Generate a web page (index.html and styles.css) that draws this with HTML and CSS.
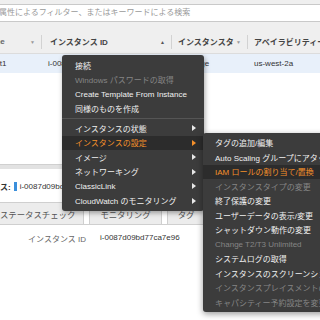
FILE: index.html
```html
<!DOCTYPE html>
<html lang="ja">
<head>
    <meta charset="UTF-8">
    <meta name="viewport" content="width=device-width, initial-scale=1.0">
    <title>EC2 インスタンス</title>
    <link rel="stylesheet" href="styles.css">
</head>
<body>
    <div class="toolbar">
        <div class="search">属性によるフィルター、またはキーワードによる検索</div>
    </div>

    <div class="grid">
        <div class="thead">
            <div class="th c1"><span class="cut-head">Name</span><span class="sort">▼</span></div>
            <div class="th c2"><span>インスタンス ID</span><span class="sort dark">▲</span></div>
            <div class="th c3"><span>インスタンスタ</span><span class="sort">▼</span></div>
            <div class="th c4"><span>アベイラビリティーゾーン</span></div>
        </div>
        <div class="trow selected">
            <div class="td"><span class="cut-cell">test1</span></div>
            <div class="td pad">i-0087d09bd77ca7e96</div>
            <div class="td pad">m4.large</div>
            <div class="td pad">us-west-2a</div>
        </div>
    </div>

    <div class="splitter"></div>

    <div class="detail-head">
        <strong>ス:</strong>
        <span class="swatch"></span>
        <span>i-0087d09bd77ca7e96</span>
    </div>

    <div class="tabs">
        <div class="tab first">ステータスチェック</div>
        <div class="tab">モニタリング</div>
        <div class="tab">タグ</div>
    </div>

    <div class="desc">
        <span class="label">インスタンス ID</span>
        <span class="value">i-0087d09bd77ca7e96</span>
    </div>

    <!-- right-click menu -->
    <div class="menu">
        <div class="item">接続</div>
        <div class="item disabled">Windows パスワードの取得</div>
        <div class="item">Create Template From Instance</div>
        <div class="item">同様のものを作成</div>
        <div class="sep"></div>
        <div class="item sub">インスタンスの状態<span class="arrow"></span></div>
        <div class="item sub active">インスタンスの設定<span class="arrow"></span>
            <div class="menu submenu">
                <div class="item">タグの追加/編集</div>
                <div class="item">Auto Scaling グループにアタッチ</div>
                <div class="item active">IAM ロールの割り当て/置換</div>
                <div class="item disabled">インスタンスタイプの変更</div>
                <div class="item">終了保護の変更</div>
                <div class="item">ユーザーデータの表示/変更</div>
                <div class="item">シャットダウン動作の変更</div>
                <div class="item disabled">Change T2/T3 Unlimited</div>
                <div class="item">システムログの取得</div>
                <div class="item">インスタンスのスクリーンショットの取得</div>
                <div class="item disabled">インスタンスプレイスメントの変更</div>
                <div class="item disabled">キャパシティー予約設定を変更</div>
            </div>
        </div>
        <div class="item sub">イメージ<span class="arrow"></span></div>
        <div class="item sub">ネットワーキング<span class="arrow"></span></div>
        <div class="item sub">ClassicLink<span class="arrow"></span></div>
        <div class="item sub">CloudWatch のモニタリング<span class="arrow"></span></div>
    </div>
</body>
</html>
```

FILE: styles.css
```css
html, body {
    margin: 0;
    width: 320px;
    height: 320px;
    overflow: hidden;
}
body {
    position: relative;
    background: white;
    font-family: "Liberation Sans", Arial, "Noto Sans CJK JP", sans-serif;
    font-size: 8px;
    color: #333;
}
.toolbar {
    background-color: #efefef;
    padding: 4px 0 8px;
}
.search {
    height: 16px;
    line-height: 16px;
    background: white;
    border-top: 1px solid #c9c9c9;
    border-bottom: 1px solid #c9c9c9;
    padding-left: 0;
    text-indent: -1px;
    color: #9a9a9a;
    white-space: nowrap;
}
.thead, .trow {
    display: grid;
    grid-template-columns: 42px 130px 76px 1fr;
}
.thead {
    height: 23px;
    align-items: center;
    background-color: #efefef;
    border-bottom: 1px solid #dcdcdc;
    font-weight: bold;
    color: #444;
}
.th {
    display: flex;
    justify-content: space-between;
    align-items: center;
    height: 14px;
    padding: 0 6px 0 8px;
    border-right: 1px solid #d2d2d2;
    white-space: nowrap;
    overflow: hidden;
}
.th.c1 {
    padding-left: 0;
}
.th.c3 {
    padding-left: 6px;
}
.th.c4 {
    border-right: none;
    padding-left: 6px;
}
.cut-head {
    margin-left: -17px;
    color: #666;
}
.sort {
    font-size: 5px;
    color: #999;
    font-weight: normal;
}
.sort.dark {
    color: #555;
}
.trow {
    height: 19px;
    align-items: center;
    white-space: nowrap;
}
.trow.selected {
    background-color: #e8f0fa;
}
.td {
    overflow: hidden;
}
.td.pad {
    padding-left: 6px;
}
.cut-cell {
    margin-left: -11px;
}
.splitter {
    margin-top: 91px;
    height: 4px;
    background-color: #e2e2e2;
    border-top: 1px solid #d0d0d0;
}
.detail-head {
    display: flex;
    align-items: center;
    gap: 3px;
    height: 31px;
    padding-top: 2px;
    white-space: nowrap;
}
.swatch {
    width: 3px;
    height: 9px;
    background-color: #3b8fdb;
}
.tabs {
    display: flex;
    gap: 5px;
    height: 22px;
    border-bottom: 1px solid #cfcfcf;
}
.tab {
    display: flex;
    align-items: center;
    padding: 0 10px;
    background-color: #ececec;
    border: 1px solid #cfcfcf;
    border-bottom: none;
    font-size: 8.4px;
    color: #555;
    white-space: nowrap;
}
.tab.first {
    margin-left: -11px;
    padding-right: 8px;
}
.desc {
    display: flex;
    gap: 14px;
    margin-top: 8px;
    white-space: nowrap;
}
.label {
    width: 86px;
    text-align: right;
    color: #666;
}
.value {
    color: #333;
}

/* context menu */
.menu {
    position: absolute;
    left: 62px;
    top: 55px;
    width: 142px;
    padding: 3px 0;
    background-color: #3c3c3c;
    border-radius: 3px;
    box-shadow: 1px 2px 5px rgba(0,0,0,0.35);
    color: #f0f0f0;
    z-index: 2;
}
.item {
    position: relative;
    display: flex;
    justify-content: space-between;
    align-items: center;
    height: 14.5px;
    padding: 0 8px 0 13px;
    white-space: nowrap;
}
.item.disabled {
    color: #858585;
}
.item.active {
    background-color: #2c2c2c;
    color: #f5902a;
}
.sep {
    height: 1px;
    margin: 2px 0;
    background-color: #555;
}
.arrow {
    width: 0;
    height: 0;
    border-top: 3px solid transparent;
    border-bottom: 3px solid transparent;
    border-left: 4px solid #e8e8e8;
}
.active > .arrow {
    border-left-color: #f5902a;
}
.submenu {
    left: 141px;
    top: -2.5px;
    width: 150px;
    padding: 2.5px 0;
    color: #f0f0f0;
    box-shadow: 0 2px 6px rgba(0,0,0,0.4);
    overflow: hidden;
}
.submenu .item {
    padding-left: 12px;
    overflow: hidden;
}
```
